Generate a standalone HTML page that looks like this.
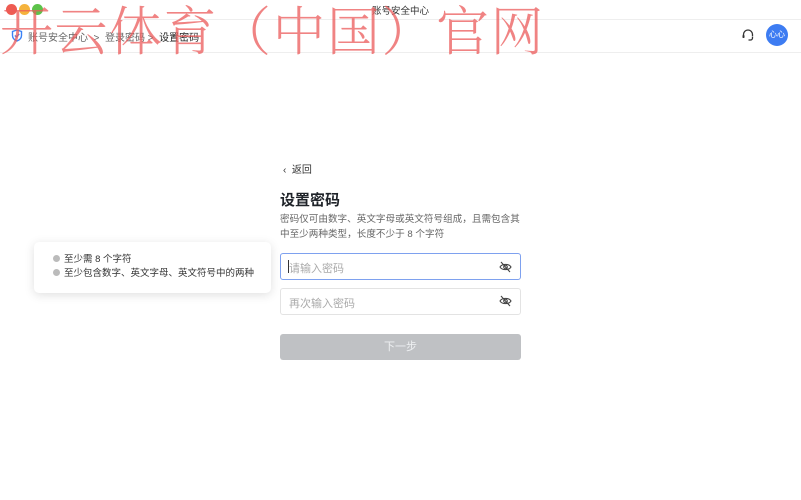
<!DOCTYPE html>
<html><head><meta charset="utf-8"><style>
*{margin:0;padding:0;box-sizing:border-box}
body{width:801px;height:500px;background:#fff;font-family:"Liberation Sans","Noto Sans CJK SC",sans-serif;position:relative;overflow:hidden;color:#1f2329}
.abs{position:absolute}
.dot{position:absolute;top:4px;width:11px;height:11px;border-radius:50%}
</style></head><body>
<div class="dot" style="left:6px;background:#ee5b52"></div>
<div class="dot" style="left:19px;background:#f5b33c"></div>
<div class="dot" style="left:32px;background:#5cc24a"></div>
<div class="abs" style="left:0;right:0;top:3px;text-align:center;font-size:9.5px;color:#333">账号安全中心</div>
<div class="abs" style="left:0;right:0;top:19px;border-top:1px solid #eee"></div>
<div class="abs" style="left:0;right:0;top:52px;border-top:1px solid #eee"></div>
<svg class="abs" style="left:11px;top:29px" width="12" height="13" viewBox="0 0 12 13"><path d="M6 1L1.5 2.5V6.5C1.5 9 3.5 11 6 12C8.5 11 10.5 9 10.5 6.5V2.5Z" fill="none" stroke="#3b82f6" stroke-width="1.4"/><path d="M3.8 6.5L5.4 8L8.3 5" fill="none" stroke="#3b82f6" stroke-width="1.3"/></svg>
<div class="abs" style="left:28px;top:29px;font-size:10px;color:#666;white-space:nowrap">账号安全中心 &nbsp;&gt;&nbsp; 登录密码 &gt;&nbsp; <span style="color:#222">设置密码</span></div>
<svg class="abs" style="left:741px;top:28px" width="14" height="14" viewBox="0 0 14 14"><path d="M2.5 8V6.5a4.5 4.5 0 0 1 9 0V8M11.5 8.5v1.5a2 2 0 0 1-2 2H7.5" fill="none" stroke="#333" stroke-width="1.3"/><rect x="1.5" y="7" width="2" height="3" rx="0.8" fill="#333"/></svg>
<div class="abs" style="left:766px;top:24px;width:22px;height:22px;border-radius:50%;background:#3d7cf2;color:#fff;font-size:8px;line-height:22px;text-align:center">心心</div>
<div class="abs" style="left:0;top:-10px;font-family:'Noto Serif CJK SC',serif;font-weight:300;font-size:53px;color:rgba(235,90,90,0.75);white-space:nowrap;letter-spacing:1.5px">开云体育（中国）官网</div>

<div class="abs" style="left:283px;top:161px;font-size:10px;color:#333">&lsaquo;&nbsp; 返回</div>
<div class="abs" style="left:280px;top:189px;font-size:15px;font-weight:bold;color:#1f2329">设置密码</div>
<div class="abs" style="left:280px;top:212px;width:244px;font-size:9.6px;line-height:15px;color:#666">密码仅可由数字、英文字母或英文符号组成，且需包含其中至少两种类型，长度不少于 8 个字符</div>
<div class="abs" style="left:280px;top:253px;width:241px;height:27px;border:1px solid #7ea1ef;border-radius:3px;font-size:11px;color:#aaa;padding:6px 8px">请输入密码</div>
<div class="abs" style="left:288px;top:260px;width:1px;height:13px;background:#333"></div>
<div class="abs" style="left:280px;top:288px;width:241px;height:27px;border:1px solid #e3e3e3;border-radius:3px;font-size:11px;color:#aaa;padding:6px 8px">再次输入密码</div>
<svg class="abs" style="left:499px;top:261px" width="13" height="12" viewBox="0 0 13 12"><path d="M1 6C3 2.5 10 2.5 12 6C10 9.5 3 9.5 1 6Z" fill="none" stroke="#444" stroke-width="1.1"/><circle cx="6.5" cy="6" r="1.8" fill="none" stroke="#444" stroke-width="1.1"/><path d="M2 1L11 11" stroke="#444" stroke-width="1.1"/></svg>
<svg class="abs" style="left:499px;top:295px" width="13" height="12" viewBox="0 0 13 12"><path d="M1 6C3 2.5 10 2.5 12 6C10 9.5 3 9.5 1 6Z" fill="none" stroke="#444" stroke-width="1.1"/><circle cx="6.5" cy="6" r="1.8" fill="none" stroke="#444" stroke-width="1.1"/><path d="M2 1L11 11" stroke="#444" stroke-width="1.1"/></svg>
<div class="abs" style="left:280px;top:334px;width:241px;height:26px;background:#bfc1c4;border-radius:3px;color:#eef0f2;font-size:11px;text-align:center;line-height:26px">下一步</div>

<div class="abs" style="left:34px;top:242px;width:237px;height:51px;background:#fff;border-radius:5px;box-shadow:0 2px 10px rgba(0,0,0,0.13)"></div>
<div class="abs" style="left:53px;top:253px;font-size:9.5px;line-height:14px;color:#333;white-space:nowrap">
<div><span style="display:inline-block;width:7px;height:7px;border-radius:50%;background:#bbb;margin-right:4px"></span>至少需 8 个字符</div>
<div><span style="display:inline-block;width:7px;height:7px;border-radius:50%;background:#bbb;margin-right:4px"></span>至少包含数字、英文字母、英文符号中的两种</div>
</div>
</body></html>
